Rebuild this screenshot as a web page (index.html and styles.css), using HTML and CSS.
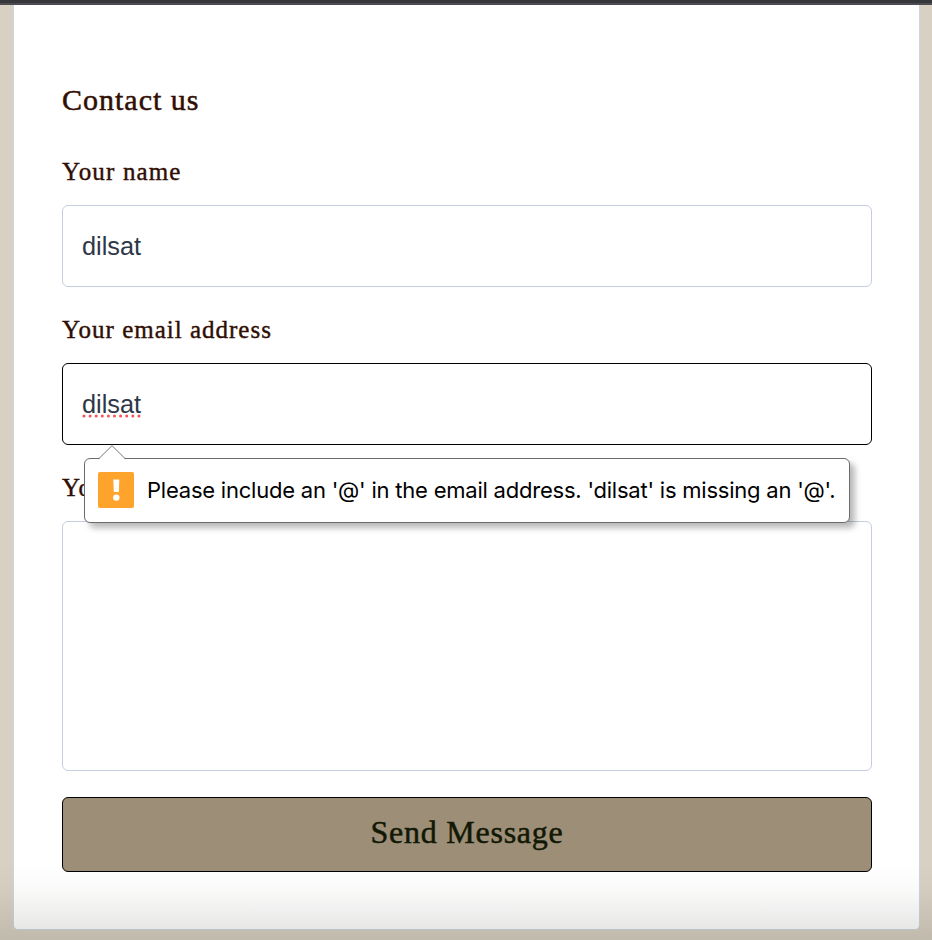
FILE: index.html
```html
<!DOCTYPE html>
<html lang="en">
<head>
<meta charset="utf-8">
<title>Contact us</title>
<link rel="stylesheet" href="styles.css">
</head>
<body>
<div class="topbar"></div>
<main class="card">
  <form class="form" novalidate>
    <h1 class="title">Contact us</h1>
    <label class="label label-name" for="name">Your name</label>
    <div class="field" id="name"><span>dilsat</span></div>
    <label class="label" for="email">Your email address</label>
    <div class="field field-focus" id="email">
      <span class="misspelled">dilsat<svg class="dots" width="60" height="4" viewBox="0 0 60 4"><path d="M2 2H59" /></svg></span>
      <div class="tooltip" role="alert">
        <svg class="arrow" width="28" height="15" viewBox="0 0 28 15"><path class="arrow-fill" d="M1 14L14 1L27 14V15H1Z"/><path class="arrow-line" d="M1 13.5L14 .7L27 13.5"/></svg>
        <svg class="warn" width="36" height="36" viewBox="0 0 36 36"><rect width="36" height="36" rx="2" fill="#fea32b"/><path d="M15.3 7.5H21.3L20.8 20H15.8Z" fill="#fff"/><circle cx="18.3" cy="25.6" r="3.2" fill="#fff"/></svg>
        <span class="tip-text">Please include an '@' in the email address. 'dilsat' is missing an '@'.</span>
      </div>
    </div>
    <label class="label" for="message">Yo</label>
    <div class="field area" id="message"></div>
    <button class="send" type="button">Send Message</button>
  </form>
</main>
<div class="fade"></div>
</body>
</html>
```
FILE: styles.css
```css
* { box-sizing: border-box; }
body {
  margin: 0;
  height: 940px;
  overflow: hidden;
  background: #d8d0c3;
  font-family: "Liberation Serif", serif;
  color: #300e04;
}
.topbar {
  height: 5px;
  background: #36373b;
  border-bottom: 2px solid #4b4b51;
}
.card {
  width: 907px;
  height: 925px;
  margin-left: 13px;
  padding: 72px 47px 0 48px;
  background: #fff;
  border: 1px solid #cbd5e0;
  border-top: 0;
  border-radius: 0 0 5px 5px;
}
.form { display: flex; flex-direction: column; }
.title {
  margin: 0;
  height: 72px;
  line-height: 45px;
  font-size: 30px;
  font-weight: 400;
  letter-spacing: 1px;
  -webkit-text-stroke: .5px;
}
.label {
  height: 56px;
  line-height: 45px;
  font-size: 25px;
  letter-spacing: 1px;
  -webkit-text-stroke: .4px;
}
.label-name { letter-spacing: 1.15px; }
.field {
  position: relative;
  display: flex;
  align-items: center;
  height: 82px;
  margin-bottom: 20px;
  padding: 0 19px;
  border: 1px solid #c5cede;
  border-radius: 6px;
  font: 25.3px "Liberation Sans", sans-serif;
  color: #2d3748;
}
.field-focus { border-color: #000; }
.misspelled { position: relative; }
.dots { position: absolute; left: 0; bottom: 1px; }
.dots path { stroke: #f5525a; stroke-width: 3; stroke-linecap: round; stroke-dasharray: 0 6.1; fill: none; }
.tooltip {
  position: absolute;
  z-index: 2;
  left: 21px;
  top: 94px;
  width: 766px;
  height: 65px;
  display: flex;
  align-items: center;
  gap: 13px;
  padding: 0 13px 2px;
  background: #fff;
  border: 1px solid #6b6b6b;
  border-radius: 6px;
  box-shadow: 5px 5px 6px rgba(0, 0, 0, .28);
  font: 22px Inter, sans-serif;
  letter-spacing: -.22px;
  color: #000;
  white-space: nowrap;
}
.arrow { position: absolute; left: 13px; top: -14px; }
.arrow-fill { fill: #fff; }
.arrow-line { fill: none; stroke: #777; }
.warn { flex: none; }
.area { height: 250px; margin-bottom: 26px; }
.send {
  height: 75px;
  padding: 0 0 4px;
  background: #9d8e78;
  border: 1px solid #000;
  border-radius: 6px;
  font: 32px "Liberation Serif", serif;
  letter-spacing: .75px;
  color: #111804;
  -webkit-text-stroke: .5px;
}
.fade {
  position: absolute;
  left: 0;
  right: 0;
  bottom: 0;
  height: 78px;
  background: linear-gradient(rgba(30, 40, 10, 0), rgba(30, 35, 20, .025) 35%, rgba(30, 35, 20, .13));
  pointer-events: none;
}
```
